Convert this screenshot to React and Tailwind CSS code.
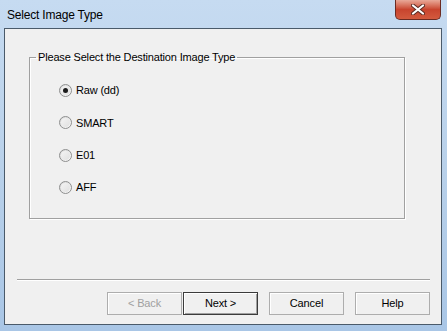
import React from 'react'

const types = [
	{ label: 'Raw (dd)', checked: true },
	{ label: 'SMART' },
	{ label: 'E01' },
	{ label: 'AFF' },
]

function Radio({ checked }) {
	return (
		<span className="w-[13px] h-[13px] rounded-full border border-[#8e8f8f] bg-gradient-to-br from-[#d8d8d8] to-[#fbfbfb] flex items-center justify-center">
			<span className="w-[9px] h-[9px] rounded-full bg-gradient-to-br from-[#f4f4f4] to-[#e0e0e0] flex items-center justify-center">
				{checked && <span className="w-[5px] h-[5px] rounded-full bg-[#1b1b1b]" />}
			</span>
		</span>
	)
}

function WinButton({ children, disabled, primary }) {
	return (
		<button
			disabled={disabled}
			className={
				'w-[75px] h-[23px] text-[11px] tracking-[-0.15px] bg-[#f0f0f0] flex items-center justify-center ' +
				(primary
					? 'border border-[#3b3b3b] shadow-[inset_1px_1px_0_#fff,inset_-1px_-1px_0_#a0a0a0]'
					: 'border border-[#adadad] shadow-[inset_1px_1px_0_#fff]') +
				(disabled ? ' text-[#a0a0a0]' : ' text-black')
			}
		>
			{children}
		</button>
	)
}

export default function App() {
	return (
		<div className="w-[447px] h-[331px] flex flex-col bg-gradient-to-b from-[#c6dbf1] via-[#b9d1ea] to-[#a9c6e6] font-['Liberation_Sans',Arial,sans-serif]">
			{/* title bar */}
			<div className="h-[28px] flex justify-between">
				<div className="pl-[7px] pt-[6px] text-[12px] tracking-[-0.2px] text-black">Select Image Type</div>
				<div className="mr-[6px] w-[46px] h-[20px] rounded-b-[5px] border border-t-0 border-[#6b2b22] bg-gradient-to-b from-[#e8a898] via-[#c8442e] to-[#d35a3e] flex items-center justify-center">
					<svg width="14" height="11" viewBox="0 0 14 11">
						<path d="M2 1.5 L12 9.5 M12 1.5 L2 9.5" stroke="#5a2a22" strokeWidth="4" strokeLinecap="round" />
						<path d="M2 1.5 L12 9.5 M12 1.5 L2 9.5" stroke="#fff" strokeWidth="2.2" strokeLinecap="round" />
					</svg>
				</div>
			</div>

			{/* client area */}
			<div className="ml-[4px] mr-[5px] h-[297px] border border-[#4a5a6a] bg-[#f0f0f0] flex flex-col">
				<fieldset className="ml-[24px] mt-[22px] w-[376px] h-[168px] border border-[#a0a0a0] shadow-[1px_1px_0_#fff,inset_1px_1px_0_#fff] text-[11px] tracking-[-0.17px] text-black">
					<legend className="ml-[6px] px-[2px] leading-[13px]">Please Select the Destination Image Type</legend>
					<div className="pl-[29px] pt-[20px] flex flex-col gap-[19.33px]">
						{types.map((t) => (
							<label key={t.label} className="flex items-center gap-[4px] h-[13px]">
								<Radio checked={t.checked} />
								<span>{t.label}</span>
							</label>
						))}
					</div>
				</fieldset>

				<div className="mt-[60px] ml-[12px] mr-[11px] h-[2px] border-t border-[#a0a0a0] border-b border-b-white" />

				<div className="mt-[11px] mr-[11px] flex justify-end">
					<WinButton disabled>&lt; Back</WinButton>
					<div className="ml-[1px]">
						<WinButton primary>Next &gt;</WinButton>
					</div>
					<div className="ml-[11px]">
						<WinButton>Cancel</WinButton>
					</div>
					<div className="ml-[11px]">
						<WinButton>Help</WinButton>
					</div>
				</div>
			</div>
		</div>
	)
}
